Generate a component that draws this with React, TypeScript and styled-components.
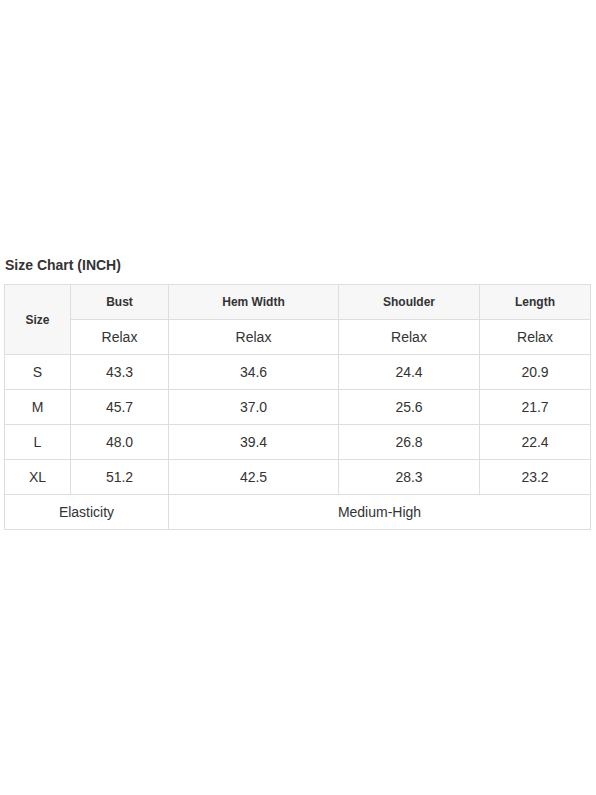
import styled, { createGlobalStyle } from "styled-components"

const GlobalStyle = createGlobalStyle`
  html, body {
    margin: 0;
    padding: 0;
    background: #ffffff;
    font-family: "Liberation Sans", Arial, sans-serif;
  }
`

const Page = styled.div`
  width: 596px;
  height: 795px;
  padding: 257px 0 0 4px;
  box-sizing: border-box;
`

const Title = styled.h3`
  margin: 0 0 10px 1px;
  font-size: 14px;
  font-weight: 700;
  line-height: 17px;
  color: #333;
`

const Table = styled.table`
  width: 587px;
  border-collapse: collapse;
  table-layout: fixed;
  color: #333;
`

const Cell = styled.td<{ $head?: boolean; $shade?: boolean }>`
  height: 34px;
  padding: 0;
  border: 1px solid #dedede;
  text-align: center;
  vertical-align: middle;
  font-size: ${({ $head }) => ($head ? "12px" : "14px")};
  font-weight: ${({ $head }) => ($head ? 700 : 400)};
  background: ${({ $shade }) => ($shade ? "#f7f7f7" : "#fff")};
`

const widths = [66, 98, 170, 141, 111]
const measures = ["Bust", "Hem Width", "Shoulder", "Length"]
const rows = [
  ["S", "43.3", "34.6", "24.4", "20.9"],
  ["M", "45.7", "37.0", "25.6", "21.7"],
  ["L", "48.0", "39.4", "26.8", "22.4"],
  ["XL", "51.2", "42.5", "28.3", "23.2"],
]

export default function App() {
  return (
    <Page>
      <GlobalStyle />
      <Title>Size Chart (INCH)</Title>
      <Table>
        <colgroup>
          {widths.map((w, i) => (
            <col key={i} style={{ width: w }} />
          ))}
        </colgroup>
        <tbody>
          <tr>
            <Cell $head $shade rowSpan={2}>Size</Cell>
            {measures.map((m) => (
              <Cell key={m} $head $shade>{m}</Cell>
            ))}
          </tr>
          <tr>
            {measures.map((m) => (
              <Cell key={m}>Relax</Cell>
            ))}
          </tr>
          {rows.map((r) => (
            <tr key={r[0]}>
              {r.map((v, i) => (
                <Cell key={i}>{v}</Cell>
              ))}
            </tr>
          ))}
          <tr>
            <Cell colSpan={2}>Elasticity</Cell>
            <Cell colSpan={3}>Medium-High</Cell>
          </tr>
        </tbody>
      </Table>
    </Page>
  )
}
